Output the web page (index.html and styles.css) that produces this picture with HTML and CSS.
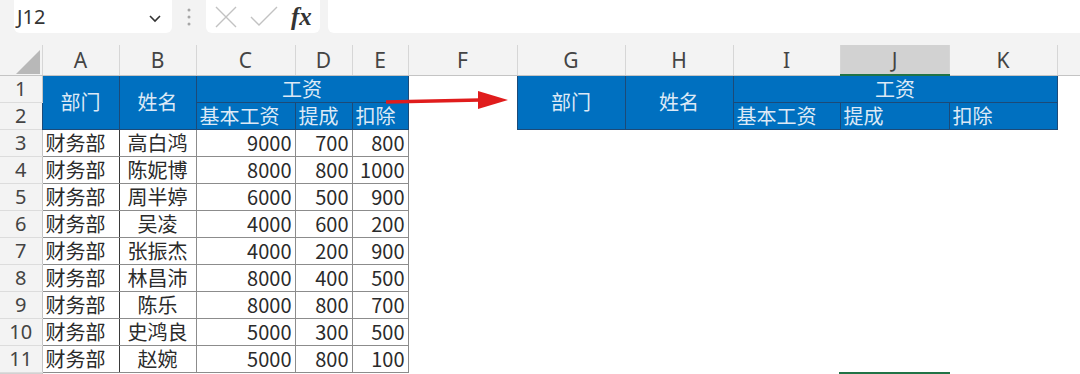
FILE: index.html
```html
<!DOCTYPE html>
<html lang="zh-CN">
<head>
    <meta charset="UTF-8">
    <title>工资表</title>
    <link rel="stylesheet" href="styles.css">
</head>
<body>
    <div class="toolbar">
        <div class="namebox">
            <span>J12</span>
            <svg class="chevron" width="14" height="10" viewBox="0 0 14 10"><path d="M2 3 L7 8 L12 3" fill="none" stroke="#333" stroke-width="1.6"/></svg>
        </div>
        <div class="grip">
            <svg width="6" height="20" viewBox="0 0 6 20"><circle cx="3" cy="3" r="1.5"/><circle cx="3" cy="10" r="1.5"/><circle cx="3" cy="17" r="1.5"/></svg>
        </div>
        <div class="fxbox">
            <svg width="24" height="22" viewBox="0 0 24 22"><path d="M2 1 L22 21 M22 1 L2 21" stroke="#c2c2c2" stroke-width="1.4"/></svg>
            <svg width="28" height="22" viewBox="0 0 28 22"><path d="M1 11 L9 19 L27 1" fill="none" stroke="#c2c2c2" stroke-width="1.4"/></svg>
            <span class="fx">fx</span>
        </div>
        <div class="formula"></div>
    </div>

    <table class="sheet">
        <colgroup>
            <col style="width:42px"><col style="width:77px"><col style="width:77px"><col style="width:99px">
            <col style="width:57px"><col style="width:56px"><col style="width:109px"><col style="width:108px">
            <col style="width:108px"><col style="width:107px"><col style="width:109px"><col style="width:108px">
            <col>
        </colgroup>
        <tr class="colhead">
            <th class="corner"><svg width="24" height="24" viewBox="0 0 24 24"><path d="M0 24 L24 24 L24 0 Z" fill="#b8b8b8"/></svg></th>
            <th>A</th><th>B</th><th>C</th><th>D</th><th>E</th><th>F</th>
            <th>G</th><th>H</th><th>I</th><th class="active">J</th><th>K</th><th class="blank"></th>
        </tr>
        <tr>
            <th class="rownum">1</th>
            <td class="hd" rowspan="2">部门</td>
            <td class="hd" rowspan="2">姓名</td>
            <td class="hd" colspan="3">工资</td>
            <td></td>
            <td class="hd" rowspan="2">部门</td>
            <td class="hd" rowspan="2">姓名</td>
            <td class="hd" colspan="3">工资</td>
            <td></td>
        </tr>
        <tr>
            <th class="rownum">2</th>
            <td class="hd sub">基本工资</td><td class="hd sub">提成</td><td class="hd sub">扣除</td>
            <td></td>
            <td class="hd sub">基本工资</td><td class="hd sub">提成</td><td class="hd sub">扣除</td>
            <td></td>
        </tr>
        <tr><th class="rownum">3</th><td class="dept">财务部</td><td class="name">高白鸿</td><td class="num">9000</td><td class="num">700</td><td class="num">800</td><td></td><td></td><td></td><td></td><td></td><td></td><td></td></tr>
        <tr><th class="rownum">4</th><td class="dept">财务部</td><td class="name">陈妮博</td><td class="num">8000</td><td class="num">800</td><td class="num">1000</td><td></td><td></td><td></td><td></td><td></td><td></td><td></td></tr>
        <tr><th class="rownum">5</th><td class="dept">财务部</td><td class="name">周半婷</td><td class="num">6000</td><td class="num">500</td><td class="num">900</td><td></td><td></td><td></td><td></td><td></td><td></td><td></td></tr>
        <tr><th class="rownum">6</th><td class="dept">财务部</td><td class="name">吴凌</td><td class="num">4000</td><td class="num">600</td><td class="num">200</td><td></td><td></td><td></td><td></td><td></td><td></td><td></td></tr>
        <tr><th class="rownum">7</th><td class="dept">财务部</td><td class="name">张振杰</td><td class="num">4000</td><td class="num">200</td><td class="num">900</td><td></td><td></td><td></td><td></td><td></td><td></td><td></td></tr>
        <tr><th class="rownum">8</th><td class="dept">财务部</td><td class="name">林昌沛</td><td class="num">8000</td><td class="num">400</td><td class="num">500</td><td></td><td></td><td></td><td></td><td></td><td></td><td></td></tr>
        <tr><th class="rownum">9</th><td class="dept">财务部</td><td class="name">陈乐</td><td class="num">8000</td><td class="num">800</td><td class="num">700</td><td></td><td></td><td></td><td></td><td></td><td></td><td></td></tr>
        <tr><th class="rownum">10</th><td class="dept">财务部</td><td class="name">史鸿良</td><td class="num">5000</td><td class="num">300</td><td class="num">500</td><td></td><td></td><td></td><td></td><td></td><td></td><td></td></tr>
        <tr><th class="rownum">11</th><td class="dept">财务部</td><td class="name">赵婉</td><td class="num">5000</td><td class="num">800</td><td class="num">100</td><td></td><td></td><td></td><td></td><td></td><td></td><td></td></tr>
        <tr><th class="rownum active-row"></th><td></td><td></td><td></td><td></td><td></td><td></td><td></td><td></td><td></td><td class="selected"></td><td></td><td></td></tr>
    </table>

    <!-- red arrow drawn over the sheet -->
    <svg class="arrow" width="140" height="30" viewBox="0 0 140 30">
        <path d="M6 17 L100 15" stroke="#e01c1c" stroke-width="3.5" fill="none"/>
        <polygon points="98,6 128,15 98,24" fill="#e01c1c"/>
    </svg>
</body>
</html>
```

FILE: styles.css
```css
body {
    margin: 0;
    width: 1080px;
    height: 374px;
    overflow: hidden;
    background-color: #fff;
    font-family: "Noto Sans CJK SC", sans-serif;
    position: relative;
}
.toolbar {
    height: 45px;
    background-color: #f3f3f3;
    display: flex;
    align-items: flex-start;
    padding-left: 14px;
}
.namebox {
    width: 158px;
    height: 33px;
    background-color: #fff;
    border-radius: 0 0 6px 6px;
    display: flex;
    align-items: center;
    justify-content: space-between;
    padding: 0 10px 0 3px;
    box-sizing: border-box;
    font-family: "Noto Sans", sans-serif;
    font-size: 20px;
    color: #333;
}
.chevron {
    margin-top: 2px;
}
.grip {
    width: 34px;
    height: 33px;
    display: flex;
    align-items: center;
    justify-content: center;
    fill: #a6a6a6;
}
.fxbox {
    width: 114px;
    height: 33px;
    background-color: #fff;
    border-radius: 0 0 6px 6px;
    display: flex;
    align-items: center;
    gap: 12px;
    padding-left: 8px;
    box-sizing: border-box;
}
.fx {
    font-family: "Liberation Serif", serif;
    font-style: italic;
    font-weight: bold;
    font-size: 25px;
    color: #333;
    margin-left: 1px;
}
.formula {
    flex: 1;
    height: 33px;
    margin-left: 8px;
    background-color: #fff;
    border-radius: 0 0 0 6px;
}
.sheet {
    border-collapse: collapse;
    table-layout: fixed;
    width: 1080px;
    font-size: 20px;
}
.sheet tr {
    height: 27px;
}
.sheet .colhead {
    height: 29px;
}
.colhead th {
    background-color: #f3f3f3;
    font-family: "Noto Sans", sans-serif;
    font-weight: normal;
    font-size: 21px;
    color: #444;
    border-right: 1px solid #d6d6d6;
    border-bottom: 1px solid #c4c4c4;
    padding: 2px 0 0;
    line-height: 27px;
}
.colhead .corner {
    text-align: right;
    vertical-align: bottom;
    padding: 0 2px 1px 0;
    line-height: 0;
}
.colhead .active {
    background-color: #d2d2d2;
    border-bottom: 2px solid #217346;
}
.colhead .blank {
    border-right: none;
}
.rownum {
    background-color: #f3f3f3;
    font-family: "Noto Sans", sans-serif;
    font-weight: normal;
    font-size: 20px;
    color: #444;
    border-right: 1px solid #c4c4c4;
    border-bottom: 1px solid #dcdcdc;
    padding: 0;
    line-height: 26px;
}
.rownum.active-row {
    background-color: #d2d2d2;
}
.sheet td {
    padding: 0 3px;
    line-height: 26px;
    white-space: nowrap;
    overflow: hidden;
    color: #2b2b2b;
}
.sheet td.hd {
    background-color: #0070c0;
    color: #dce9f6;
    text-align: center;
    border: 1px solid #1c4a78;
}
.sheet td.sub {
    text-align: left;
    padding-left: 3px;
}
.sheet td.dept {
    border: 1px solid #8c8c8c;
    border-right: 1px solid #3a3a3a;
}
.sheet td.name {
    text-align: center;
    border: 1px solid #8c8c8c;
}
.sheet td.num {
    text-align: right;
    border: 1px solid #8c8c8c;
}
.sheet td.selected {
    border: 2px solid #217346;
}
.arrow {
    position: absolute;
    left: 380px;
    top: 85px;
}
```
